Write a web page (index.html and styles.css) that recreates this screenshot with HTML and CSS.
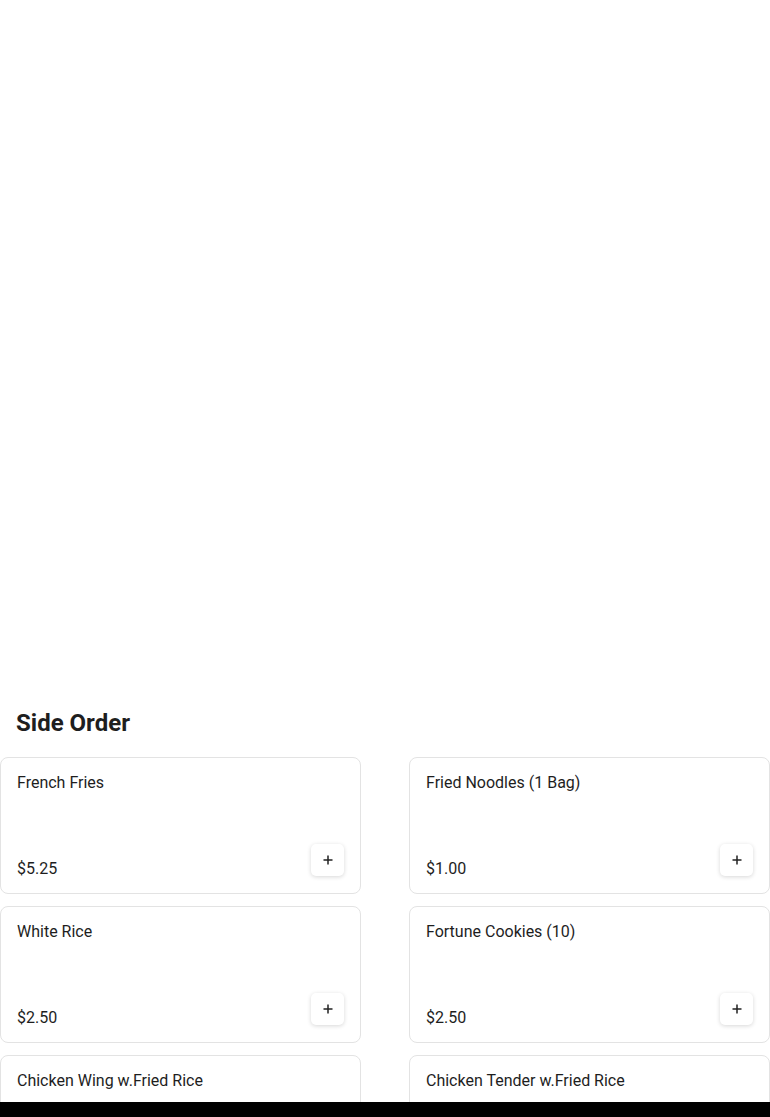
FILE: index.html
```html
<!DOCTYPE html>
<html lang="en">
<head>
<meta charset="utf-8">
<title>Side Order</title>
<link rel="stylesheet" href="styles.css">
</head>
<body>
<main class="page">
  <div class="hero"></div>
  <section class="category">
    <h2 class="category-title">Side Order</h2>
    <div class="grid">
      <div class="card">
        <div class="card-name">French Fries</div>
        <div class="card-foot">
          <span class="price">$5.25</span>
          <button class="add" aria-label="Add"><svg viewBox="0 0 12 12" width="12" height="12"><path d="M6 1.5v9M1.5 6h9" stroke="#222" stroke-width="1.5" fill="none"/></svg></button>
        </div>
      </div>
      <div class="card">
        <div class="card-name">Fried Noodles (1 Bag)</div>
        <div class="card-foot">
          <span class="price">$1.00</span>
          <button class="add" aria-label="Add"><svg viewBox="0 0 12 12" width="12" height="12"><path d="M6 1.5v9M1.5 6h9" stroke="#222" stroke-width="1.5" fill="none"/></svg></button>
        </div>
      </div>
      <div class="card">
        <div class="card-name">White Rice</div>
        <div class="card-foot">
          <span class="price">$2.50</span>
          <button class="add" aria-label="Add"><svg viewBox="0 0 12 12" width="12" height="12"><path d="M6 1.5v9M1.5 6h9" stroke="#222" stroke-width="1.5" fill="none"/></svg></button>
        </div>
      </div>
      <div class="card">
        <div class="card-name">Fortune Cookies (10)</div>
        <div class="card-foot">
          <span class="price">$2.50</span>
          <button class="add" aria-label="Add"><svg viewBox="0 0 12 12" width="12" height="12"><path d="M6 1.5v9M1.5 6h9" stroke="#222" stroke-width="1.5" fill="none"/></svg></button>
        </div>
      </div>
      <div class="card">
        <div class="card-name">Chicken Wing w.Fried Rice</div>
        <div class="card-foot">
          <span class="price">$9.95</span>
          <button class="add" aria-label="Add"><svg viewBox="0 0 12 12" width="12" height="12"><path d="M6 1.5v9M1.5 6h9" stroke="#222" stroke-width="1.5" fill="none"/></svg></button>
        </div>
      </div>
      <div class="card">
        <div class="card-name">Chicken Tender w.Fried Rice</div>
        <div class="card-foot">
          <span class="price">$9.95</span>
          <button class="add" aria-label="Add"><svg viewBox="0 0 12 12" width="12" height="12"><path d="M6 1.5v9M1.5 6h9" stroke="#222" stroke-width="1.5" fill="none"/></svg></button>
        </div>
      </div>
    </div>
  </section>
</main>
<div class="bottom-bar"></div>
</body>
</html>
```
FILE: styles.css
```css
html, body {
  margin: 0;
  padding: 0;
  background: #ffffff;
  font-family: Roboto, "Liberation Sans", Arial, sans-serif;
  color: #1e1e1e;
}

.page {
  width: 770px;
}

.hero {
  height: 709px;
}

.category-title {
  margin: 0 0 20px 0;
  padding-left: 16px;
  font-size: 24px;
  font-weight: 700;
  line-height: normal;
  color: #1e1e1e;
}

.grid {
  display: grid;
  grid-template-columns: 361px 361px;
  column-gap: 48px;
  row-gap: 12px;
}

.card {
  box-sizing: border-box;
  height: 137px;
  border: 1px solid #e3e3e3;
  border-radius: 8px;
  padding: 15px 16px 17px 16px;
  display: flex;
  flex-direction: column;
  justify-content: space-between;
}

.card-name {
  font-size: 16px;
  line-height: normal;
  color: #1e1e1e;
}

.card-foot {
  display: flex;
  justify-content: space-between;
  align-items: flex-end;
}

.price {
  font-size: 16px;
  line-height: normal;
  color: #1e1e1e;
  margin-bottom: -2px;
}

.add {
  width: 33px;
  height: 32px;
  padding: 0;
  margin: 0;
  border: none;
  border-radius: 5px;
  background: #ffffff;
  box-shadow: 0 1px 4px rgba(0, 0, 0, 0.16);
  display: flex;
  align-items: center;
  justify-content: center;
  cursor: pointer;
}

.add svg {
  display: block;
}

.bottom-bar {
  position: fixed;
  left: 0;
  right: 0;
  bottom: 0;
  height: 15px;
  background: #000000;
}
```
